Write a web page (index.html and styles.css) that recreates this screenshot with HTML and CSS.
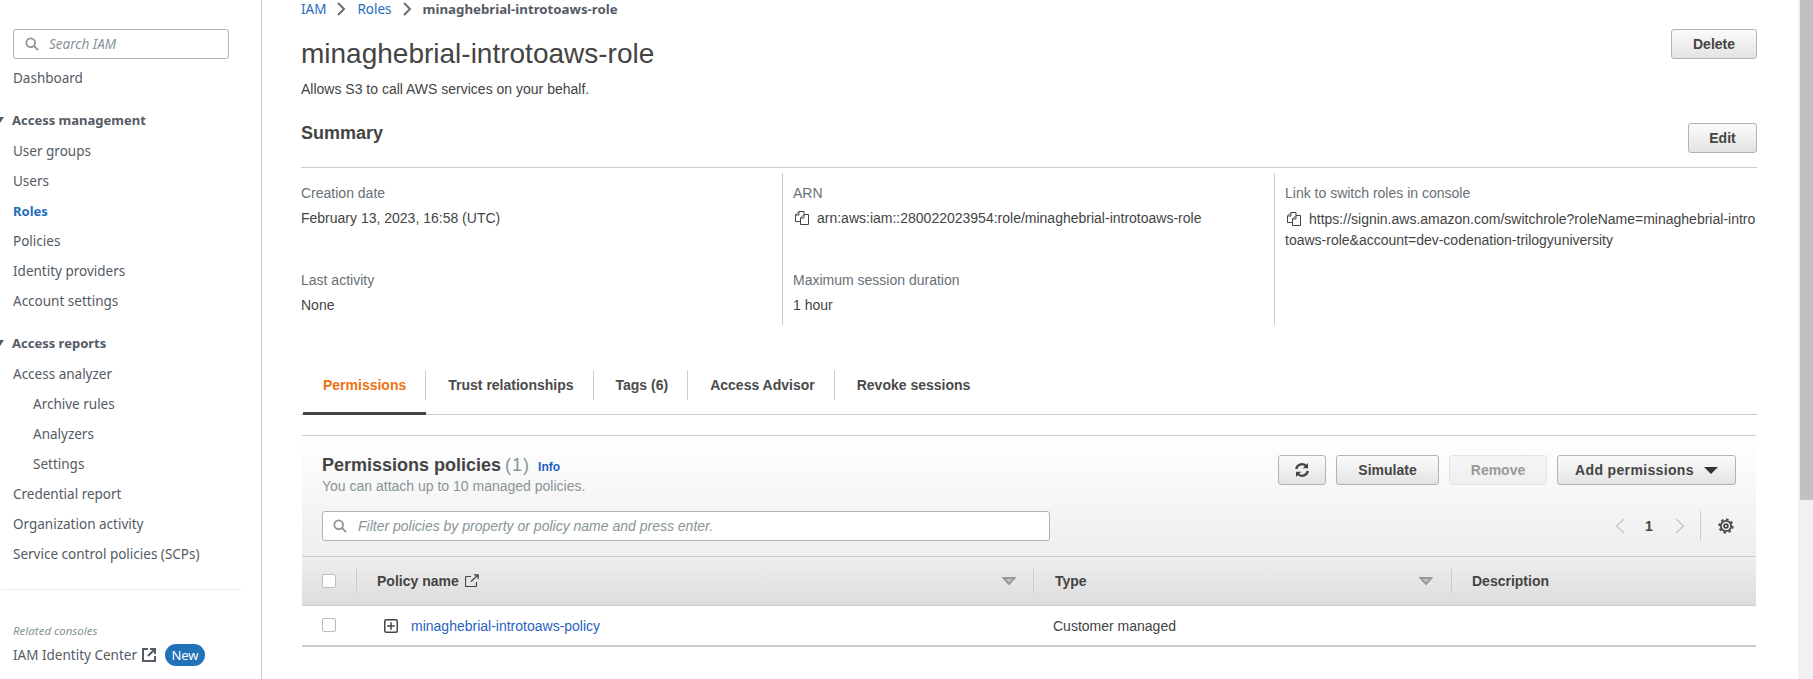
FILE: index.html
```html
<!DOCTYPE html>
<html lang="en">
<head>
<meta charset="utf-8">
<title>minaghebrial-introtoaws-role</title>
<link rel="stylesheet" href="styles.css">
</head>
<body>
<div class="page">
  <aside class="sidebar">
    <div class="side-search">
      <svg class="ico-search" viewBox="0 0 16 16"><circle cx="6.5" cy="6.5" r="5"/><path d="M10.2 10.2L15 15"/></svg>
      <span>Search IAM</span>
    </div>
    <nav class="nav">
      <a class="nav-item">Dashboard</a>
      <div class="nav-head"><i class="tri"></i>Access management</div>
      <a class="nav-item">User groups</a>
      <a class="nav-item">Users</a>
      <a class="nav-item active">Roles</a>
      <a class="nav-item">Policies</a>
      <a class="nav-item">Identity providers</a>
      <a class="nav-item">Account settings</a>
      <div class="nav-head"><i class="tri"></i>Access reports</div>
      <a class="nav-item">Access analyzer</a>
      <a class="nav-item sub">Archive rules</a>
      <a class="nav-item sub">Analyzers</a>
      <a class="nav-item sub">Settings</a>
      <a class="nav-item">Credential report</a>
      <a class="nav-item">Organization activity</a>
      <a class="nav-item">Service control policies (SCPs)</a>
    </nav>
    <div class="side-div"></div>
    <div class="related">Related consoles</div>
    <div class="identity">
      <span>IAM Identity Center</span>
      <svg class="ico-ext-solid" viewBox="0 0 14 14"><path d="M6 1H1v12h12V8M8 1h5v5M13 1L6 8"/></svg>
      <span class="badge">New</span>
    </div>
  </aside>

  <main class="main">
    <div class="crumbs">
      <a>IAM</a>
      <svg class="chev" viewBox="0 0 8 14"><path d="M1 1l6 6-6 6"/></svg>
      <a>Roles</a>
      <svg class="chev" viewBox="0 0 8 14"><path d="M1 1l6 6-6 6"/></svg>
      <span class="crumb-cur">minaghebrial-introtoaws-role</span>
    </div>

    <header class="head">
      <div>
        <h1>minaghebrial-introtoaws-role</h1>
        <p class="desc">Allows S3 to call AWS services on your behalf.</p>
      </div>
      <button class="btn btn-delete">Delete</button>
    </header>

    <div class="sum-head">
      <h2>Summary</h2>
      <button class="btn btn-edit">Edit</button>
    </div>

    <section class="sum-grid">
      <div class="sum-col">
        <div class="lbl">Creation date</div>
        <div class="val">February 13, 2023, 16:58 (UTC)</div>
        <div class="lbl second">Last activity</div>
        <div class="val">None</div>
      </div>
      <div class="sum-col">
        <div class="lbl">ARN</div>
        <div class="val arn"><svg class="ico-copy" viewBox="0 0 14 14"><path d="M5 10.5H.5V4L4 .5h5v3M4 .5V4H.5"/><path d="M5.5 13.5V7L9 3.5h4.5v10zM9 3.5V7H5.5"/></svg>arn:aws:iam::280022023954:role/minaghebrial-introtoaws-role</div>
        <div class="lbl second">Maximum session duration</div>
        <div class="val">1 hour</div>
      </div>
      <div class="sum-col last">
        <div class="lbl">Link to switch roles in console</div>
        <div class="val link"><svg class="ico-copy" viewBox="0 0 14 14"><path d="M5 10.5H.5V4L4 .5h5v3M4 .5V4H.5"/><path d="M5.5 13.5V7L9 3.5h4.5v10zM9 3.5V7H5.5"/></svg>https://signin.aws.amazon.com/switchrole?roleName=minaghebrial-introtoaws-role&amp;account=dev-codenation-trilogyuniversity</div>
      </div>
    </section>

    <div class="tabs">
      <div class="tab active"><span class="tab-label">Permissions</span></div>
      <div class="tab"><span class="tab-label">Trust relationships</span></div>
      <div class="tab"><span class="tab-label">Tags (6)</span></div>
      <div class="tab"><span class="tab-label">Access Advisor</span></div>
      <div class="tab"><span class="tab-label plain">Revoke sessions</span></div>
    </div>

    <section class="panel">
      <div class="panel-head">
        <div class="panel-top">
          <div>
            <div class="panel-title"><strong>Permissions policies</strong> <span class="count">(1)</span><a class="info">Info</a></div>
            <div class="panel-sub">You can attach up to 10 managed policies.</div>
          </div>
          <div class="actions">
            <button class="btn btn-refresh"><svg class="ico-refresh" viewBox="0 0 16 16"><path d="M2.2 7A5.8 5.8 0 0 1 12.6 4.6M13.8 9A5.8 5.8 0 0 1 3.4 11.4"/><path class="arrowhead" d="M14 1v5.2H8.8zM2 15V9.800h5.200z"/></svg></button>
            <button class="btn btn-sim">Simulate</button>
            <button class="btn btn-remove">Remove</button>
            <button class="btn btn-add">Add permissions<i class="tri-down"></i></button>
          </div>
        </div>
        <div class="panel-filter">
          <div class="filter">
            <svg class="ico-search" viewBox="0 0 16 16"><circle cx="6.5" cy="6.5" r="5"/><path d="M10.2 10.2L15 15"/></svg>
            <span>Filter policies by property or policy name and press enter.</span>
          </div>
          <div class="pager">
            <svg class="pg-chev" viewBox="0 0 10 16"><path d="M9 1L1.5 8 9 15"/></svg>
            <span class="pg-num">1</span>
            <svg class="pg-chev next" viewBox="0 0 10 16"><path d="M1 1l7.5 7L1 15"/></svg>
            <i class="pg-div"></i>
            <svg class="ico-gear" viewBox="0 0 16 16"><circle cx="8" cy="8" r="1.900"/><circle cx="8" cy="8" r="5.200"/><circle class="teeth" cx="8" cy="8" r="6.800" pathLength="48" stroke-dasharray="3 3"/></svg>
          </div>
        </div>
      </div>

      <div class="tbl-row tbl-head">
        <div class="th first"><i class="check"></i></div>
        <div class="th">
          <span class="th-name">Policy name</span>
          <svg class="ico-ext" viewBox="0 0 14 14"><path d="M6 2.5H1.500a1 1 0 0 0-1 1v8a1 1 0 0 0 1 1h9a1 1 0 0 0 1-1V8M9 .8h4.200V5M13 1L6 7.500"/></svg>
          <svg class="sort" viewBox="0 0 14 8"><path d="M1.500 1h11L7 7z"/></svg>
        </div>
        <div class="th type">
          <span class="th-name">Type</span>
          <svg class="sort" viewBox="0 0 14 8"><path d="M1.500 1h11L7 7z"/></svg>
        </div>
        <div class="th plain"><span class="th-name">Description</span></div>
      </div>

      <div class="tbl-row tbl-body">
        <div class="td first"><i class="check"></i></div>
        <div class="td policy">
          <svg class="ico-plus" viewBox="0 0 14 14"><rect x=".75" y=".75" width="12.500" height="12.500" rx="1.500"/><path d="M7 3.200v7.600M3.200 7h7.600"/></svg>
          <a class="link-policy">minaghebrial-introtoaws-policy</a>
        </div>
        <div class="td cust">Customer managed</div>
        <div class="td"></div>
      </div>
    </section>
  </main>

  <div class="scrollbar"><div class="thumb"></div></div>
</div>
</body>
</html>
```

FILE: styles.css
```css
* { box-sizing: border-box; }
html, body { margin: 0; height: 100%; overflow: hidden; background: #fff; }
body { font-family: "Liberation Sans", Arial, sans-serif; font-size: 14px; color: #444; }
svg { display: block; flex: none; fill: none; }
a { cursor: pointer; }

.page { display: flex; height: 679px; overflow: hidden; }

/* sidebar */
.sidebar { width: 262px; flex: none; border-right: 1px solid #ccc; padding-top: 29px; font-family: "Noto Sans", sans-serif; font-size: 13.5px; color: #545b64; overflow: hidden; }
.side-search { display: flex; align-items: center; width: 216px; height: 30px; margin-left: 13px; padding-left: 11px; border: 1px solid #aab7b8; border-radius: 3px; color: #879596; font-style: italic; }
.ico-search { width: 14px; height: 14px; stroke: #879596; stroke-width: 2; }
.side-search span { margin-left: 10px; }
.nav { margin-top: 4px; }
.nav-item { display: block; height: 30px; line-height: 30px; padding-left: 13px; white-space: nowrap; }
.nav-item.sub { padding-left: 33px; }
.nav-item.active { color: #1f6cbd; font-weight: 700; font-size: 13px; }
.nav-head { display: flex; align-items: center; height: 30px; margin: 12px 0 1px; font-size: 13px; font-weight: 700; }
.tri { width: 8px; margin: 0 8px 0 -4px; border-top: 6px solid #545b64; border-left: 4px solid transparent; border-right: 4px solid transparent; }
.side-div { width: 240px; height: 1px; margin: 20px 0 0 1px; background: #eaeded; }
.related { margin: 34px 0 0 13px; height: 14px; line-height: 14px; font-size: 11.5px; font-style: italic; color: #879596; }
.identity { display: flex; align-items: center; margin: 6px 0 0 13px; height: 22px; }
.ico-ext-solid { width: 14px; height: 14px; margin-left: 5px; stroke: #545b64; stroke-width: 2; }
.badge { margin-left: 9px; width: 40px; height: 22px; line-height: 22px; text-align: center; border-radius: 11px; background: #2272b9; color: #fff; font-size: 13px; }

/* main */
.main { flex: 1; min-width: 0; padding: 0 41px 0 39px; }
.crumbs { display: flex; align-items: center; height: 18px; font-family: "Noto Sans", sans-serif; font-size: 13.5px; }
.crumbs a { color: #1f6cbd; }
.chev { width: 8px; height: 14px; margin: 0 12px 0 11px; stroke: #687078; stroke-width: 2; }
.crumb-cur { font-size: 13.25px; font-weight: 700; color: #545b64; }

.head { display: flex; justify-content: space-between; align-items: flex-start; margin-top: 11px; }
h1 { margin: 8px 0 0; font-size: 28px; line-height: 34px; font-weight: 400; color: #444; }
.desc { margin: 9px 0 0; line-height: 18px; color: #444; }

.btn { display: inline-flex; align-items: center; justify-content: center; height: 30px; padding: 0; border: 1px solid #aab7b8; border-radius: 3px; background: linear-gradient(#fbfbfb, #e3e3e3); font-family: "Liberation Sans", Arial, sans-serif; font-size: 14px; font-weight: 700; color: #444; }
.btn-delete { width: 86px; }
.btn-edit { width: 69px; }

.sum-head { display: flex; justify-content: space-between; align-items: flex-start; height: 45px; margin-top: 25px; border-bottom: 1px solid #ccc; }
h2 { margin: 0; font-size: 18px; line-height: 20px; font-weight: 700; color: #444; }

.sum-grid { display: grid; grid-template-columns: 482px 492px 1fr; height: 152px; margin-top: 5px; }
.sum-col { border-right: 1px solid #ccc; padding: 11px 0 0 10px; }
.sum-col:first-child { padding-left: 0; }
.sum-col.last { border-right: 0; }
.lbl { line-height: 18px; color: #687078; }
.val { margin-top: 7px; line-height: 18px; color: #444; }
.second { margin-top: 44px; }
.arn { display: flex; align-items: center; white-space: nowrap; }
.link { line-height: 21px; margin-top: 7px; word-break: break-all; }
.ico-copy { width: 14px; height: 14px; stroke: #444; stroke-width: 1; margin: 0 8px 0 2px; }
.link .ico-copy { display: inline-block; vertical-align: -2px; }

.tabs { display: flex; height: 45px; margin-top: 45px; border-bottom: 1px solid #ccc; }
.tab { height: 45px; border-bottom: 3px solid transparent; padding-left: 22px; margin-bottom: -1px; }
.tab.active { margin-left: 2px; padding-left: 20px; border-bottom-color: #444; }
.tab-label { display: block; height: 30px; line-height: 30px; padding-right: 19px; border-right: 1px solid #ccc; font-weight: 700; color: #4a4a4a; white-space: nowrap; }
.tab-label.plain { border-right: 0; }
.tab.active .tab-label { color: #ec7211; }

.panel { margin: 20px 1px 0 1px; border-top: 1px solid #ccc; }
.panel-head { padding: 19px 20px 15px; background: linear-gradient(#fff, #eee); }
.panel-top { display: flex; justify-content: space-between; align-items: flex-start; }
.panel-title { display: flex; align-items: baseline; height: 20px; line-height: 20px; font-size: 18px; color: #444; white-space: pre; }
.panel-title strong { font-weight: 700; }
.count { color: #879596; font-weight: 400; margin-left: 4px; letter-spacing: 1px; }
.info { margin-left: 8px; font-size: 12px; font-weight: 700; color: #1a5fc0; }
.panel-sub { margin-top: 2px; line-height: 18px; color: #879596; }
.actions { display: flex; gap: 10px; }
.btn-refresh { width: 48px; }
.ico-refresh { width: 16px; height: 16px; stroke: #444; stroke-width: 2.3; }
.arrowhead { fill: #444; stroke: none; }
.btn-sim { width: 103px; }
.btn-remove { width: 98px; border-color: #e5e5e5; background: linear-gradient(#f6f6f6, #efefef); color: #999; }
.btn-add { width: 179px; letter-spacing: .35px; }
.tri-down { width: 14px; margin-left: 10px; border-top: 7px solid #333; border-left: 7px solid transparent; border-right: 7px solid transparent; }

.panel-filter { display: flex; justify-content: space-between; align-items: center; margin-top: 16px; }
.filter { display: flex; align-items: center; width: 728px; height: 30px; padding-left: 10px; border: 1px solid #aab7b8; border-radius: 3px; background: #fff; color: #879596; font-style: italic; }
.filter span { margin-left: 11px; }
.pager { display: flex; align-items: center; margin-right: 2px; }
.pg-chev { width: 10px; height: 16px; stroke: #c8c8c8; stroke-width: 1.5; }
.pg-num { width: 8px; margin: 0 22px 0 20px; font-weight: 700; color: #444; }
.pg-div { width: 1px; height: 30px; margin: 0 17px 0 15px; background: #ccc; }
.ico-gear { width: 16px; height: 16px; stroke: #444; stroke-width: 1.8; }
.teeth { stroke-width: 1.6; }

.tbl-row { display: grid; grid-template-columns: 55px 677px 418px 1fr; }
.tbl-head { height: 50px; border-top: 1px solid #ccc; border-bottom: 1px solid #ccc; background: linear-gradient(#eee, #ddd); align-items: center; }
.th { display: flex; align-items: center; height: 24px; padding-left: 20px; padding-right: 17px; border-right: 1px solid #ccc; }
.th.type { padding-left: 21px; padding-right: 18px; }
.th.plain { border-right: 0; }
.th-name { font-weight: 700; color: #444; }
.check { display: block; width: 14px; height: 14px; border: 1px solid #bbb; border-radius: 2px; background: #fff; }
.ico-ext { width: 14px; height: 14px; margin-left: 6px; stroke: #444; stroke-width: 1.2; }
.sort { width: 14px; height: 8px; margin-left: auto; fill: #c4c4c4; stroke: #999; stroke-width: 2; }
.tbl-body { height: 41px; border-bottom: 2px solid #ccc; align-items: center; }
.td.first { padding-left: 20px; margin-top: -1px; }
.td.policy { display: flex; align-items: center; padding-left: 27px; }
.ico-plus { width: 14px; height: 14px; stroke: #444; stroke-width: 1.5; }
.link-policy { margin-left: 13px; color: #2a62c0; }
.td.cust { padding-left: 19px; color: #444; }

/* scrollbar */
.scrollbar { width: 15px; flex: none; background: #f1f1f1; }
.thumb { width: 13px; height: 500px; margin-left: 2px; background: #c1c1c1; }
```
